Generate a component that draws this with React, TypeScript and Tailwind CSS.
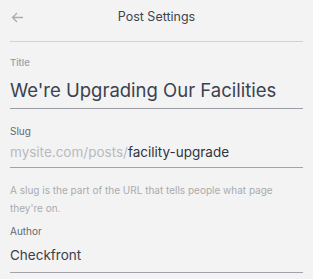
import React from 'react';

const App: React.FC = () => {
  return (
    <div className="h-[279px] w-[313px] overflow-hidden bg-[#f3f3f3] font-['Inter',sans-serif]">
      <div className="relative flex h-[35px] items-center justify-center">
        <button className="absolute left-[11px] top-[11px] text-[#a9abb0]">
          <svg width="13" height="13" viewBox="0 0 13 13" fill="none" stroke="currentColor" strokeWidth="1.3">
            <path d="M12 6.5H1.5M6 2L1.5 6.5L6 11" />
          </svg>
        </button>
        <p className="text-[12.5px] text-[#3d4450]">Post Settings</p>
      </div>

      <div className="px-[10px]">
        <div className="mt-[6px] border-t border-[#d2d2d2]" />

        <div className="pt-[14px]">
          <p className="text-[9.5px] font-medium leading-[14px] text-[#9a9da4]">Title</p>
          <p className="mt-[8px] border-b border-[#9c9ea5] pb-[6px] text-[18.5px] leading-[24px] text-[#3a4250]">
            We're Upgrading Our Facilities
          </p>
        </div>

        <div className="pt-[15px]">
          <p className="text-[10px] leading-[14px] text-[#666a70]">Slug</p>
          <p className="mt-[4px] border-b border-[#a0a3aa] pb-[5px] text-[13.5px] leading-[20px] text-[#2f3540]">
            <span className="text-[#b8babd]">mysite.com/posts/</span>facility-upgrade
          </p>
        </div>

        <p className="mt-[13px] text-[10px] leading-[18px] text-[#a9abae]">
          A slug is the part of the URL that tells people what page they're on.
        </p>

        <div className="pt-[7px]">
          <p className="text-[10px] leading-[14px] text-[#666a70]">Author</p>
          <p className="mt-[7px] border-b border-[#a0a3aa] pb-[7px] text-[13.5px] leading-[20px] text-[#3a4049]">
            Checkfront
          </p>
        </div>
      </div>
    </div>
  );
};

export default App;
